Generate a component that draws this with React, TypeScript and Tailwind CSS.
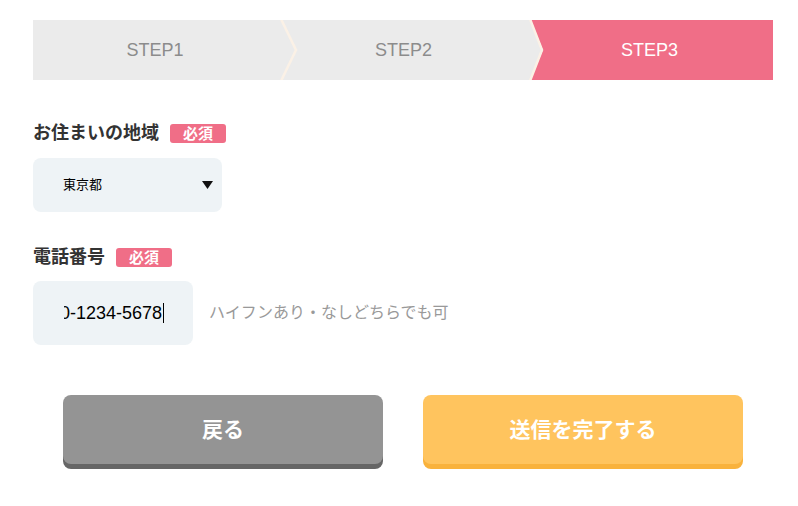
import React from "react";

const FONT = { fontFamily: '"Liberation Sans", "Noto Sans CJK JP", sans-serif' };

function Sep({ dx }: { dx: number }) {
  return (
    <svg
      className="absolute top-0 left-[-1px] z-10"
      width={dx + 4}
      height={60}
      viewBox={`0 0 ${dx + 4} 60`}
    >
      <polyline
        points={`1,-1 ${dx},30 1,61`}
        fill="none"
        stroke="#fbf1e6"
        strokeWidth={2.5}
      />
    </svg>
  );
}

function Badge() {
  return (
    <span className="ml-[11px] inline-flex h-[19px] w-[56px] items-center justify-center rounded-[3px] bg-[#f06e87] text-[15px] font-bold leading-none text-white">
      必須
    </span>
  );
}

export default function App() {
  return (
    <div className="min-h-[506px] w-[798px] bg-white" style={FONT}>
      <div className="ml-[33px] w-[740px] pt-[20px]">
        {/* steps */}
        <div className="flex h-[60px] w-[740px]">
          <div className="flex w-[248px] items-center justify-center bg-[#ebebeb] pr-[4px] text-[18px] text-[#8c8c8c]">
            STEP1
          </div>
          <div className="relative flex w-[249px] items-center justify-center bg-[#ebebeb] pr-[4px] text-[18px] text-[#8c8c8c]">
            <Sep dx={16} />
            STEP2
          </div>
          <div className="relative flex flex-1 items-center justify-center bg-[#ebebeb] pr-[4px] text-[18px] text-white">
            <div
              className="absolute inset-0 bg-[#f06e87]"
              style={{ clipPath: "polygon(0 0, 100% 0, 100% 100%, 0 100%, 13px 50%)" }}
            />
            <Sep dx={13} />
            <span className="relative">STEP3</span>
          </div>
        </div>

        {/* region */}
        <div className="mt-[41px] flex h-[24px] items-center">
          <span className="text-[18px] font-bold leading-[24px] text-[#333]">お住まいの地域</span>
          <Badge />
        </div>
        <div className="mt-[13px] flex h-[54px] w-[189px] items-center justify-between rounded-[8px] bg-[#eef3f6] pl-[30px] pr-[9px]">
          <span className="text-[13px] text-black">東京都</span>
          <svg width="11" height="8" viewBox="0 0 11 8">
            <polygon points="0,0 11,0 5.5,8" fill="#111" />
          </svg>
        </div>

        {/* phone */}
        <div className="mt-[33px] flex h-[24px] items-center">
          <span className="text-[18px] font-bold leading-[24px] text-[#333]">電話番号</span>
          <Badge />
        </div>
        <div className="mt-[12px] flex items-center">
          <div className="flex h-[64px] w-[160px] items-center rounded-[8px] bg-[#eef3f6] pl-[31px] pr-[29px]">
            <div className="flex flex-1 justify-end overflow-hidden whitespace-nowrap">
              <span className="text-[18px] leading-[22px] text-black">090-1234-5678</span>
              <span className="ml-[1px] h-[20px] w-[1px] shrink-0 self-center bg-black" />
            </div>
          </div>
          <span className="ml-[16px] text-[16px] text-[#999]">ハイフンあり・なしどちらでも可</span>
        </div>

        {/* buttons */}
        <div className="mt-[50px] flex justify-center gap-[40px]">
          <button className="h-[69px] w-[320px] rounded-[8px] bg-[#949494] text-[21px] font-bold text-white shadow-[0_5px_0_#666666]">
            戻る
          </button>
          <button className="h-[69px] w-[320px] rounded-[8px] bg-[#ffc45e] text-[21px] font-bold text-white shadow-[0_5px_0_#f9b23c]">
            送信を完了する
          </button>
        </div>
      </div>
    </div>
  );
}
